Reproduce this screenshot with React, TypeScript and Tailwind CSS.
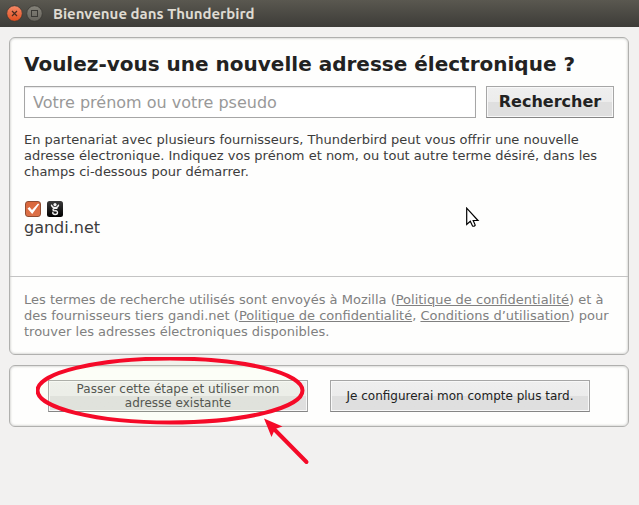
import React from 'react';

const buttonStyle =
  'border border-[#a6a6a6] border-b-[#858585] bg-linear-to-b from-[#efefef] from-0% via-[#ececec] via-50% to-[#dfdfdf] to-50% shadow-[inset_0_0_0_1px_#f8f8f8]';

const cardStyle =
  'rounded-[6px] border border-[#b0b0ae] bg-[#fefefd] shadow-[inset_0_0_2px_1px_#dcdcda]';

const TitleBar: React.FC = () => (
  <header className="flex h-[27px] items-center gap-[3px] bg-linear-to-b from-[#5a5850] to-[#3d3c38] px-[6px]">
    <button type="button" aria-label="Fermer" className="size-[17px]">
      <svg viewBox="0 0 17 17" className="block size-full">
        <defs>
          <linearGradient id="close" x1="0" y1="0" x2="0" y2="1">
            <stop offset="0" stopColor="#f58a68" />
            <stop offset="1" stopColor="#e24e1e" />
          </linearGradient>
        </defs>
        <circle cx="8.5" cy="8.5" r="7.8" fill="url(#close)" stroke="#3a3833" strokeWidth=".8" />
        <path d="M6 6l5 5M11 6l-5 5" stroke="#4a2b1f" strokeWidth="1.2" />
      </svg>
    </button>
    <button type="button" aria-label="Agrandir" className="size-[17px]">
      <svg viewBox="0 0 17 17" className="block size-full">
        <defs>
          <linearGradient id="maximize" x1="0" y1="0" x2="0" y2="1">
            <stop offset="0" stopColor="#85837a" />
            <stop offset="1" stopColor="#66645d" />
          </linearGradient>
        </defs>
        <circle cx="8.5" cy="8.5" r="7.8" fill="url(#maximize)" stroke="#3a3833" strokeWidth=".8" />
        <rect x="5.5" y="5.5" width="6" height="6" fill="none" stroke="#3a3935" />
      </svg>
    </button>
    <div className="pl-[7px] font-['Ubuntu','Noto_Sans',sans-serif] text-[15px] font-bold leading-[20px] text-[#dfdbd2]">
      Bienvenue dans Thunderbird
    </div>
  </header>
);

const Provider: React.FC = () => (
  <div className="mt-[21px] flex flex-col gap-px">
    <div className="flex gap-[6px] pl-px">
      <span className="grid size-[16px]">
        <input
          id="gandi"
          type="checkbox"
          defaultChecked
          className="peer col-start-1 row-start-1 size-[16px] appearance-none rounded-[3px] border border-[#8f4c32] bg-white checked:bg-linear-to-b checked:from-[#d9673b] checked:to-[#dd7148]"
        />
        <svg
          viewBox="0 0 16 16"
          className="pointer-events-none invisible col-start-1 row-start-1 size-[16px] peer-checked:visible"
        >
          <path d="M2.500 7.500L4.500 6 7 9l6-6.500 1.200.8L7.200 13z" fill="#fff" />
        </svg>
      </span>
      <svg viewBox="0 0 16 16" className="size-[16px]">
        <defs>
          <linearGradient id="gandi-bg" x1="0" y1="0" x2="0" y2="1">
            <stop offset="0" stopColor="#3a3a3a" />
            <stop offset="1" stopColor="#000" />
          </linearGradient>
        </defs>
        <rect width="16" height="16" rx="2.5" fill="url(#gandi-bg)" />
        <circle cx="8" cy="3.600" r="1.600" fill="#f2f2f2" />
        <path
          d="M4.500 4.200c.6 1.900 1.900 2.600 3.500 2.600s2.900-.7 3.500-2.600M9.800 7.300C7.500 7 6 7.600 6 8.700s1.200 1.200 2.600 1.100c2.600 0 2.600 3.700-.4 3.700-1.900 0-2.900-1-2.300-2.300"
          fill="none"
          stroke="#f2f2f2"
          strokeWidth="1.400"
          strokeLinecap="round"
        />
      </svg>
    </div>
    <label htmlFor="gandi" className="self-start text-[16px] leading-[20px] text-[#3c3c3c]">
      gandi.net
    </label>
  </div>
);

const App: React.FC = () => {
  return (
    <div className="min-h-screen bg-[#f2f1f0] font-['DejaVu_Sans',sans-serif]">
      <TitleBar />

      <main className="flex flex-col gap-[10px] px-[10px] pt-[10px] pl-[9px]">
        <section className={cardStyle}>
          <div className="relative px-[14px] pt-[12px] pb-[38px]">
            <h1 className="text-[20px] font-bold leading-[28px] text-[#222]">
              Voulez-vous une nouvelle adresse électronique ?
            </h1>
            <form className="mt-[8px] flex gap-[10px]" onSubmit={(e) => e.preventDefault()}>
              <input
                type="text"
                aria-label="Votre prénom ou votre pseudo"
                placeholder="Votre prénom ou votre pseudo"
                className="h-[32px] min-w-0 flex-1 border border-[#a6a6a6] bg-white px-[8px] text-[16px] text-[#222] shadow-[inset_0_1px_1px_#e8e8e8] placeholder:text-[#999]"
              />
              <button
                type="submit"
                className={`h-[32px] w-[128px] text-[16px] font-bold text-[#222] ${buttonStyle}`}
              >
                Rechercher
              </button>
            </form>
            <p className="mt-[14px] text-[13px] leading-[16px] text-[#3c3c3c]">
              En partenariat avec plusieurs fournisseurs, Thunderbird peut vous offrir une nouvelle
              adresse électronique. Indiquez vos prénom et nom, ou tout autre terme désiré, dans les
              champs ci-dessous pour démarrer.
            </p>
            <Provider />

            {/* Mouse pointer */}
            <svg viewBox="0 0 14 21" className="absolute top-[169px] left-[456px] h-[21px] w-[14px]">
              <path
                d="M.7 1.200v16.300l3.600-3.300 2.200 4.700q1.500 1 2.700-.8l-2-4.600h4.800z"
                fill="#fff"
                stroke="#000"
                strokeWidth="1.200"
              />
            </svg>
          </div>

          <p className="border-t border-[#c4c4c4] px-[14px] pt-[15px] pb-[14px] text-[13px] leading-[16px] text-[#808080]">
            Les termes de recherche utilisés sont envoyés à Mozilla (
            <a href="#mozilla" className="underline">Politique de confidentialité</a>) et à des
            fournisseurs tiers gandi.net (
            <a href="#gandi" className="underline">Politique de confidentialité</a>,{' '}
            <a href="#conditions" className="underline">Conditions d’utilisation</a>) pour trouver les
            adresses électroniques disponibles.
          </p>
        </section>

        <section className={`flex flex-wrap justify-center gap-[22px] py-[14px] ${cardStyle}`}>
          <div className="relative flex">
            <button
              type="button"
              className={`h-[32px] w-[260px] px-[20px] text-[12px] leading-[14px] text-[#444] ${buttonStyle}`}
            >
              Passer cette étape et utiliser mon adresse existante
            </button>
            {/* Highlight around the button, with its arrow */}
            <svg
              viewBox="0 0 276 110"
              className="pointer-events-none absolute -top-[23px] -left-[12px] h-[110px] w-[276px] max-w-none"
            >
              <ellipse
                cx="134"
                cy="33.500"
                rx="132.500"
                ry="32"
                fill="#f0ffc0"
                fillOpacity=".1"
                stroke="#f50a28"
                strokeWidth="4"
              />
              <path d="M270.500 105L237 71" stroke="#f50a28" strokeWidth="4" strokeLinecap="round" />
              <path d="M228 61.500l18.500 8-7.500 2.500-3.500 8z" fill="#f50a28" />
            </svg>
          </div>
          <button
            type="button"
            className={`h-[32px] w-[260px] text-[12px] leading-[14px] text-[#222] ${buttonStyle}`}
          >
            Je configurerai mon compte plus tard.
          </button>
        </section>
      </main>
    </div>
  );
};

export default App;
